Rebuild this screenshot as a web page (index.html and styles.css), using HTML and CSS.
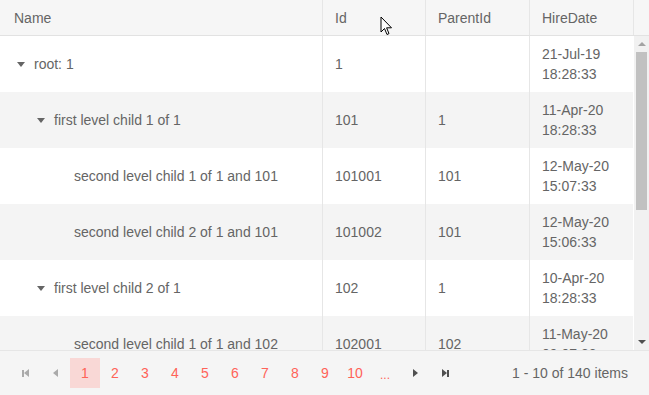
FILE: index.html
```html
<!DOCTYPE html>
<html lang="en">
<head>
    <meta charset="UTF-8">
    <meta name="viewport" content="width=device-width, initial-scale=1.0">
    <title>TreeList</title>
    <link rel="stylesheet" href="styles.css">
</head>
<body>
    <div class="treelist">
        <!-- Header -->
        <div class="grid-header">
            <table>
                <colgroup>
                    <col class="col-name"><col class="col-id"><col class="col-parent"><col class="col-date"><col class="col-filler">
                </colgroup>
                <tr>
                    <th>Name</th>
                    <th>Id</th>
                    <th>ParentId</th>
                    <th>HireDate</th>
                    <th></th>
                </tr>
            </table>
            <svg class="cursor" width="13" height="21" viewBox="0 0 13 21">
                <path d="M1 1 L1 16 L4.5 12.5 L7 18.5 L9 17.6 L6.6 11.8 L11.5 11.8 Z" fill="#fff" stroke="#000" stroke-width="1" stroke-linejoin="round"/>
            </svg>
        </div>

        <!-- Body -->
        <div class="grid-body">
            <div class="grid-content">
                <table>
                    <colgroup>
                        <col class="col-name"><col class="col-id"><col class="col-parent"><col class="col-date">
                    </colgroup>
                    <tr>
                        <td><span class="indent"><i class="expand"></i></span>root: 1</td>
                        <td>1</td>
                        <td></td>
                        <td>21-Jul-19<br>18:28:33</td>
                    </tr>
                    <tr class="alt">
                        <td><span class="indent"></span><span class="indent"><i class="expand"></i></span>first level child 1 of 1</td>
                        <td>101</td>
                        <td>1</td>
                        <td>11-Apr-20<br>18:28:33</td>
                    </tr>
                    <tr>
                        <td><span class="indent"></span><span class="indent"></span><span class="indent"></span>second level child 1 of 1 and 101</td>
                        <td>101001</td>
                        <td>101</td>
                        <td>12-May-20<br>15:07:33</td>
                    </tr>
                    <tr class="alt">
                        <td><span class="indent"></span><span class="indent"></span><span class="indent"></span>second level child 2 of 1 and 101</td>
                        <td>101002</td>
                        <td>101</td>
                        <td>12-May-20<br>15:06:33</td>
                    </tr>
                    <tr>
                        <td><span class="indent"></span><span class="indent"><i class="expand"></i></span>first level child 2 of 1</td>
                        <td>102</td>
                        <td>1</td>
                        <td>10-Apr-20<br>18:28:33</td>
                    </tr>
                    <tr class="alt">
                        <td><span class="indent"></span><span class="indent"></span><span class="indent"></span>second level child 1 of 1 and 102</td>
                        <td>102001</td>
                        <td>102</td>
                        <td>11-May-20<br>09:07:33</td>
                    </tr>
                </table>
            </div>
            <!-- Scrollbar -->
            <div class="scrollbar">
                <span class="arrow-up"></span>
                <div class="track"><div class="thumb"></div></div>
                <span class="arrow-down"></span>
            </div>
        </div>

        <!-- Pager -->
        <div class="pager">
            <div class="pager-nav">
                <span class="nav-btn disabled"><i class="bar"></i><i class="tri-left"></i></span>
                <span class="nav-btn disabled"><i class="tri-left"></i></span>
                <span class="page selected">1</span>
                <span class="page">2</span>
                <span class="page">3</span>
                <span class="page">4</span>
                <span class="page">5</span>
                <span class="page">6</span>
                <span class="page">7</span>
                <span class="page">8</span>
                <span class="page">9</span>
                <span class="page">10</span>
                <span class="page dots">...</span>
                <span class="nav-btn"><i class="tri-right"></i></span>
                <span class="nav-btn"><i class="tri-right"></i><i class="bar"></i></span>
            </div>
            <div class="pager-info">1 - 10 of 140 items</div>
        </div>
    </div>
</body>
</html>
```

FILE: styles.css
```css
* {
    box-sizing: border-box;
    margin: 0;
    padding: 0;
}

body {
    font-family: "Liberation Sans", Arial, sans-serif;
    font-size: 14px;
    color: #656565;
    background-color: #ffffff;
    width: 649px;
    height: 395px;
    overflow: hidden;
}

.treelist {
    display: flex;
    flex-direction: column;
    height: 395px;
}

table {
    border-collapse: separate;
    border-spacing: 0;
    table-layout: fixed;
    width: 100%;
}

.col-name { width: 322px; }
.col-id { width: 103px; }
.col-parent { width: 104px; }
.col-date { width: 104px; }
.col-filler { width: 16px; }

/* Header */
.grid-header {
    position: relative;
    background-color: #f6f6f6;
    border-bottom: 1px solid #e2e2e2;
}

.grid-header th {
    height: 35px;
    padding: 0 12px;
    text-align: left;
    font-weight: normal;
    border-left: 1px solid #e6e6e6;
    white-space: nowrap;
}

.grid-header th:first-child {
    border-left: none;
    padding-left: 14px;
}

.cursor {
    position: absolute;
    left: 380px;
    top: 16px;
}

/* Body */
.grid-body {
    display: flex;
    height: 314px;
    overflow: hidden;
}

.grid-content {
    width: 634px;
    overflow: hidden;
}

.grid-content table {
    width: 633px;
}

.grid-content td {
    height: 56px;
    padding: 8px 12px;
    line-height: 20px;
    border-left: 1px solid #e6e6e6;
    vertical-align: middle;
    white-space: nowrap;
}

.grid-content td:first-child {
    border-left: none;
    padding-left: 14px;
}

.grid-content tr.alt td {
    background-color: #f4f4f4;
}

.indent {
    display: inline-block;
    width: 20px;
    height: 20px;
    vertical-align: top;
    position: relative;
}

.expand {
    position: absolute;
    left: 3px;
    top: 8px;
    width: 0;
    height: 0;
    border-left: 4px solid transparent;
    border-right: 4px solid transparent;
    border-top: 5px solid #656565;
}

/* Scrollbar */
.scrollbar {
    width: 15px;
    background-color: #f1f1f1;
    display: flex;
    flex-direction: column;
    align-items: center;
}

.arrow-up,
.arrow-down {
    width: 0;
    height: 0;
    border-left: 4px solid transparent;
    border-right: 4px solid transparent;
}

.arrow-up {
    margin-top: 6px;
    margin-bottom: 6px;
    border-bottom: 4px solid #a3a3a3;
}

.arrow-down {
    margin-top: 6px;
    margin-bottom: 6px;
    border-top: 4px solid #505050;
}

.track {
    flex: 1;
    width: 100%;
    padding: 0 2px 0 2px;
}

.thumb {
    height: 158px;
    background-color: #c1c1c1;
}

/* Pager */
.pager {
    flex: 1;
    display: flex;
    align-items: center;
    justify-content: space-between;
    background-color: #f5f5f5;
    border-top: 1px solid #e6e6e6;
    padding: 0 21px 0 10px;
}

.pager-nav {
    display: flex;
    align-items: center;
}

.nav-btn,
.page {
    width: 30px;
    height: 30px;
    display: flex;
    align-items: center;
    justify-content: center;
}

.page {
    color: #ff6358;
}

.page.selected {
    background-color: #f9d8d6;
}

.page.dots {
    font-size: 12px;
    padding-top: 3px;
}

.nav-btn i {
    display: block;
}

.bar {
    width: 2px;
    height: 7px;
    background-color: #505050;
}

.tri-left {
    width: 0;
    height: 0;
    border-top: 4px solid transparent;
    border-bottom: 4px solid transparent;
    border-right: 5px solid #505050;
}

.tri-right {
    width: 0;
    height: 0;
    border-top: 4px solid transparent;
    border-bottom: 4px solid transparent;
    border-left: 5px solid #505050;
}

.nav-btn.disabled .bar {
    background-color: #aaaaaa;
}

.nav-btn.disabled .tri-left {
    border-right-color: #aaaaaa;
}

.pager-info {
    white-space: nowrap;
}
```
